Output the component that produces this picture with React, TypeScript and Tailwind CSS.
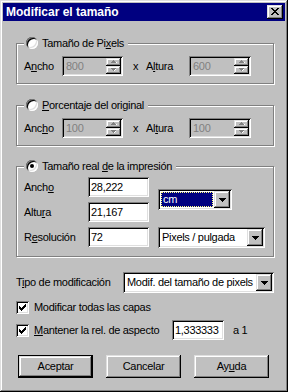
import React from "react";

const sunken =
  "shadow-[inset_1px_1px_0_#808080,inset_-1px_-1px_0_#ffffff,inset_2px_2px_0_#000000,inset_-2px_-2px_0_#dfdfdf]";
const raised =
  "shadow-[inset_-1px_-1px_0_#000000,inset_1px_1px_0_#dfdfdf,inset_-2px_-2px_0_#808080,inset_2px_2px_0_#ffffff]";

function U({ children }: { children: React.ReactNode }) {
  return <span className="underline underline-offset-[1px] decoration-1">{children}</span>;
}

function Radio({ checked }: { checked?: boolean }) {
  return (
    <div className={`flex h-[12px] w-[12px] shrink-0 items-center justify-center rounded-full bg-white ${sunken}`}>
      {checked && <div className="h-[4px] w-[4px] rounded-full bg-black" />}
    </div>
  );
}

function Check() {
  return (
    <div className={`flex h-[13px] w-[13px] shrink-0 items-center justify-center bg-white ${sunken}`}>
      <svg width="7" height="7" viewBox="0 0 7 7" shapeRendering="crispEdges">
        <rect x="6" y="0" width="1" height="1" fill="#000" />
        <rect x="5" y="1" width="2" height="1" fill="#000" />
        <rect x="0" y="2" width="1" height="1" fill="#000" />
        <rect x="4" y="2" width="3" height="1" fill="#000" />
        <rect x="0" y="3" width="2" height="1" fill="#000" />
        <rect x="3" y="3" width="3" height="1" fill="#000" />
        <rect x="0" y="4" width="5" height="1" fill="#000" />
        <rect x="1" y="5" width="3" height="1" fill="#000" />
        <rect x="2" y="6" width="1" height="1" fill="#000" />
      </svg>
    </div>
  );
}

function DownArrow() {
  return (
    <svg width="7" height="4" viewBox="0 0 7 4" shapeRendering="crispEdges">
      <rect x="0" y="0" width="7" height="1" fill="#000" />
      <rect x="1" y="1" width="5" height="1" fill="#000" />
      <rect x="2" y="2" width="3" height="1" fill="#000" />
      <rect x="3" y="3" width="1" height="1" fill="#000" />
    </svg>
  );
}

function SpinArrow({ up }: { up?: boolean }) {
  return (
    <svg width="6" height="4" viewBox="0 0 6 4" shapeRendering="crispEdges">
      {up ? (
        <>
          <rect x="2" y="0" width="1" height="1" fill="#808080" />
          <rect x="1" y="1" width="3" height="1" fill="#808080" />
          <rect x="3" y="1" width="1" height="1" fill="#808080" />
          <rect x="1" y="2" width="5" height="1" fill="#ffffff" />
          <rect x="0" y="2" width="5" height="1" fill="#808080" />
        </>
      ) : (
        <>
          <rect x="0" y="0" width="5" height="1" fill="#808080" />
          <rect x="1" y="1" width="3" height="1" fill="#808080" />
          <rect x="4" y="1" width="1" height="1" fill="#ffffff" />
          <rect x="2" y="2" width="1" height="1" fill="#808080" />
          <rect x="3" y="2" width="1" height="1" fill="#ffffff" />
        </>
      )}
    </svg>
  );
}

function Spin({ value, wide }: { value: string; wide?: boolean }) {
  return (
    <div
      className={`flex h-[20px] ${wide ? "w-[62px]" : "w-[61px]"} shrink-0 items-stretch bg-[#c0c0c0] p-[2px] ${sunken}`}
    >
      <div className="flex flex-1 items-center pl-[2px] text-[#808080]">{value}</div>
      <div className="flex w-[15px] flex-col">
        <div className={`flex flex-1 items-center justify-center bg-[#c0c0c0] ${raised}`}>
          <SpinArrow up />
        </div>
        <div className={`flex flex-1 items-center justify-center bg-[#c0c0c0] ${raised}`}>
          <SpinArrow />
        </div>
      </div>
    </div>
  );
}

function Edit({ value }: { value: string }) {
  return (
    <div className={`flex h-[20px] w-[61px] shrink-0 items-center bg-white px-[3px] ${sunken}`}>{value}</div>
  );
}

function Group({
  legend,
  checked,
  className,
  children,
}: {
  legend: React.ReactNode;
  checked?: boolean;
  className: string;
  children: React.ReactNode;
}) {
  return (
    <div
      className={`relative w-[258px] border border-[#808080] shadow-[1px_1px_0_#ffffff,inset_1px_1px_0_#ffffff] ${className}`}
    >
      <div className="absolute left-[7px] top-[-7px] flex h-[12px] items-center gap-[4px] bg-[#c0c0c0] pl-[2px] pr-[4px]">
        <Radio checked={checked} />
        <span className="leading-[12px]">{legend}</span>
      </div>
      {children}
    </div>
  );
}

function Button({ children, def }: { children: React.ReactNode; def?: boolean }) {
  if (def) {
    return (
      <div className="h-[23px] w-[75px] border border-black">
        <div className={`flex h-full w-full items-center justify-center bg-[#c0c0c0] ${raised}`}>{children}</div>
      </div>
    );
  }
  return (
    <div className={`flex h-[23px] w-[75px] items-center justify-center bg-[#c0c0c0] ${raised}`}>{children}</div>
  );
}

export default function App() {
  return (
    <div
      className={`flex h-[392px] w-[288px] flex-col bg-[#c0c0c0] p-[3px] font-['Liberation_Sans',Arial,sans-serif] text-[11px] leading-[13px] tracking-[-0.3px] text-black ${raised}`}
    >
      <div className="flex h-[18px] items-center justify-between bg-[#000080] pl-[3px] pr-[2px]">
        <span className="text-[12px] font-bold leading-[18px] tracking-[0px] text-white">Modificar el tamaño</span>
        <div className={`flex h-[14px] w-[16px] items-center justify-center bg-[#c0c0c0] ${raised}`}>
          <svg width="8" height="7" viewBox="0 0 8 7" shapeRendering="crispEdges" className="mb-[1px] mr-[1px]">
            <rect x="0" y="0" width="2" height="1" fill="#000" />
            <rect x="6" y="0" width="2" height="1" fill="#000" />
            <rect x="1" y="1" width="2" height="1" fill="#000" />
            <rect x="5" y="1" width="2" height="1" fill="#000" />
            <rect x="2" y="2" width="4" height="1" fill="#000" />
            <rect x="3" y="3" width="2" height="1" fill="#000" />
            <rect x="2" y="4" width="4" height="1" fill="#000" />
            <rect x="1" y="5" width="2" height="1" fill="#000" />
            <rect x="5" y="5" width="2" height="1" fill="#000" />
            <rect x="0" y="6" width="2" height="1" fill="#000" />
            <rect x="6" y="6" width="2" height="1" fill="#000" />
          </svg>
        </div>
      </div>

      <div className="flex flex-col pl-[13px]">
        <Group
          className="mt-[22px] h-[41px]"
          legend={
            <>
              Tamaño de Pi<U>x</U>els
            </>
          }
        >
          <div className="flex items-center pl-[7px] pt-[12px]">
            <span className="w-[38px]">
              A<U>n</U>cho
            </span>
            <Spin value="800" />
            <span className="w-[23px] pl-[10px]">x</span>
            <span className="w-[43px]">
              A<U>l</U>tura
            </span>
            <Spin value="600" wide />
          </div>
        </Group>

        <Group
          className="mt-[21px] h-[41px]"
          legend={
            <>
              <U>P</U>orcentaje del original
            </>
          }
        >
          <div className="flex items-center pl-[7px] pt-[12px]">
            <span className="w-[38px]">
              Anc<U>h</U>o
            </span>
            <Spin value="100" />
            <span className="w-[23px] pl-[10px]">x</span>
            <span className="w-[43px]">
              Al<U>t</U>ura
            </span>
            <Spin value="100" wide />
          </div>
        </Group>

        <Group
          className="mt-[20px] h-[91px]"
          checked
          legend={
            <>
              Tamaño real <U>d</U>e la impresión
            </>
          }
        >
          <div className="flex pl-[7px] pt-[10px]">
            <div className="flex flex-col gap-[5px]">
              <div className="flex items-center">
                <span className="w-[64px]">
                  Anch<U>o</U>
                </span>
                <Edit value="28,222" />
              </div>
              <div className="flex items-center">
                <span className="w-[64px]">
                  Altu<U>r</U>a
                </span>
                <Edit value="21,167" />
              </div>
              <div className="flex items-center">
                <span className="w-[64px]">
                  R<U>e</U>solución
                </span>
                <Edit value="72" />
              </div>
            </div>
            <div className="ml-[9px] flex flex-col">
              <div className={`mt-[12px] flex h-[21px] w-[74px] bg-white p-[2px] ${sunken}`}>
                <div className="flex flex-1 p-[1px]">
                  <div className="flex flex-1 items-center border border-dotted border-[#ffff7f] bg-[#000080] pl-[1px] text-white">
                    cm
                  </div>
                </div>
                <div className={`flex w-[16px] items-center justify-center bg-[#c0c0c0] ${raised}`}>
                  <DownArrow />
                </div>
              </div>
              <div className={`mt-[17px] flex h-[21px] w-[107px] bg-white p-[2px] ${sunken}`}>
                <div className="flex flex-1 items-center pl-[2px]">Pixels / pulgada</div>
                <div className={`flex w-[16px] items-center justify-center bg-[#c0c0c0] ${raised}`}>
                  <DownArrow />
                </div>
              </div>
            </div>
          </div>
        </Group>

        <div className="mt-[15px] flex h-[21px] items-center">
          <span className="w-[107px]">
            T<U>i</U>po de modificación
          </span>
          <div className={`flex h-[21px] w-[151px] bg-white p-[2px] ${sunken}`}>
            <div className="flex flex-1 items-center pl-[2px]">Modif. del tamaño de pixels</div>
            <div className={`flex w-[16px] items-center justify-center bg-[#c0c0c0] ${raised}`}>
              <DownArrow />
            </div>
          </div>
        </div>

        <div className="mt-[8px] flex h-[13px] items-center">
          <Check />
          <span className="ml-[5px]">Modificar todas las capas</span>
        </div>

        <div className="mt-[6px] flex h-[20px] items-center">
          <Check />
          <span className="ml-[5px] w-[138px]">
            <U>M</U>antener la rel. de aspecto
          </span>
          <div className={`flex h-[20px] w-[52px] items-center bg-white px-[3px] ${sunken}`}>1,333333</div>
          <span className="ml-[9px]">a 1</span>
        </div>

        <div className="ml-[2px] mt-[15px] flex gap-[13px]">
          <Button def>Aceptar</Button>
          <Button>Cancelar</Button>
          <Button>
            Ay<U>u</U>da
          </Button>
        </div>
      </div>
    </div>
  );
}
